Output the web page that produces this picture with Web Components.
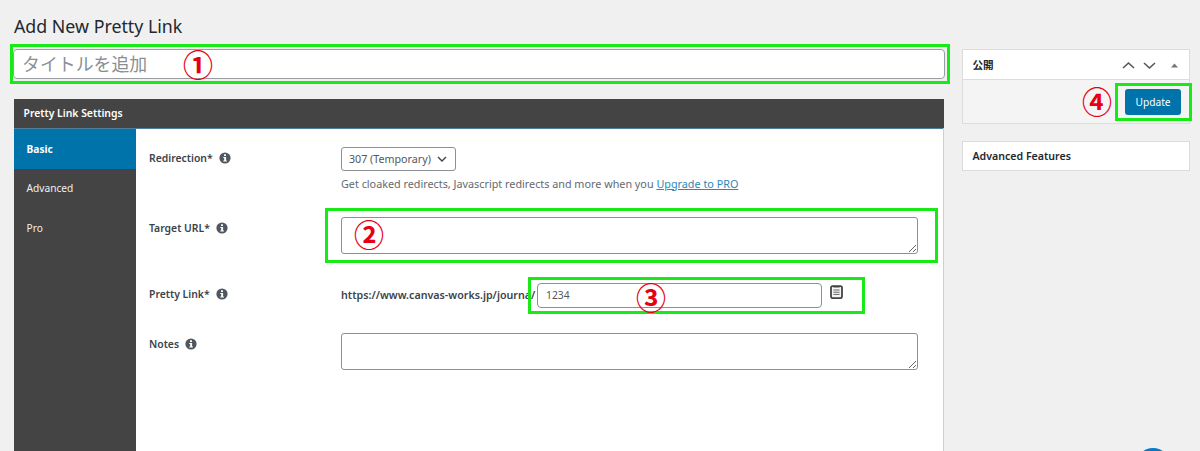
<!DOCTYPE html>
<html lang="ja"><head><meta charset="utf-8"><title>Add New Pretty Link</title>
<style>
html,body{margin:0;height:451px;overflow:hidden;background:#f0f0f1}
body{font:11px "Noto Sans","Noto Sans CJK JP",sans-serif;color:#3c434a}
</style></head><body>
<template id="t-page"><style>
:host{display:grid;grid-template-columns:930px 228px;column-gap:18px;padding:0 10px 0 14px;height:451px;overflow:hidden;box-sizing:content-box}
h1{grid-column:1/3;margin:0;font:400 17.8px/22px "Noto Sans",sans-serif;color:#23282d;padding-top:15px;height:34px}
.main{display:flex;flex-direction:column}
.side{display:flex;flex-direction:column;gap:17px}
.title-wrap{margin:0 -1px 20px;height:30px}
.fab{position:absolute;left:1136px;top:448px;width:34px;height:3px;overflow:hidden}
.fab::before{content:"";display:block;width:34px;height:34px;border-radius:50%;background:#0a78c4}
</style>
<h1>Add New Pretty Link</h1>
<div class="main"><div class="title-wrap"><slot name="title"></slot></div><slot name="panel"></slot></div>
<div class="side"><slot name="side"></slot></div>
<div class="fab"></div>
</template>

<template id="t-mark"><style>
:host{display:block;position:relative}
.frame{position:absolute;border:3px solid #17ea17;box-sizing:border-box;pointer-events:none;
 left:var(--l,0);right:var(--r,0);top:var(--t,0);bottom:var(--b,0)}
.num{position:absolute;left:var(--nx,0);top:var(--ny,0);width:44px;height:44px;margin:-22px 0 0 -22px;display:flex;align-items:center;justify-content:center;
 color:#e60012;font:700 30px/44px "Noto Sans CJK JP",sans-serif}
</style><slot></slot><div class="frame"></div><div class="num"></div></template>

<template id="t-field"><style>
:host{display:flex;align-items:center;box-sizing:border-box;background:#fff;border:1px solid #8c8f94;border-radius:4px;height:100%;padding:0 8px;color:#50575e;font:10.3px "Noto Sans",sans-serif}
:host([big]){font:17.9px "Noto Sans CJK JP",sans-serif;color:#8a8f94;border-color:#9a9ea3;padding:0 8px 2px}
</style><slot></slot></template>

<template id="t-panel"><style>
:host{display:block;background:#fff;border:1px solid #ccd0d4;border-top:0;border-bottom:0;height:352px;box-sizing:border-box;width:930px}
header{background:#444;color:#fff;height:29px;padding:0 9.5px;font:600 10.4px/29px "Noto Sans",sans-serif;margin:0 -1px}
.body{display:grid;grid-template-columns:122px 1fr;height:323px;margin-left:-1px;border-top:1px solid #4d7f9c}
nav{background:#444;display:flex;flex-direction:column}
.form{display:flex;flex-direction:column}
</style><header><slot name="head"></slot></header>
<div class="body"><nav><slot name="tabs"></slot></nav><div class="form"><slot></slot></div></div></template>

<template id="t-tab"><style>
:host{display:flex;align-items:center;height:39.5px;padding:0 0 0 12.5px;box-sizing:border-box;color:#f0f0f1;font:400 10.2px "Noto Sans",sans-serif}
:host([active]){background:#0073aa;color:#fff;font-weight:700}
</style><slot></slot></template>

<template id="t-row"><style>
:host{display:grid;grid-template-columns:192px 577px;padding-left:13px}
.lab{display:flex;align-items:center;gap:6px;font:600 10.4px "Noto Sans",sans-serif;color:#3c434a;height:18px;align-self:start;margin-top:var(--lt,0)}
</style><div class="lab"><slot name="label"></slot><info-icon></info-icon></div><div><slot></slot></div></template>

<template id="t-info"><style>:host{display:inline-flex}svg{display:block}</style>
<svg width="12" height="12" viewBox="0 0 12 12"><circle cx="6" cy="6" r="5.6" fill="#50575e"/><rect x="5" y="2.2" width="2" height="1.9" rx=".4" fill="#fff"/><path d="M4.3 5h2.8v3.6h.8v1H4.3v-1h.9V6h-.9z" fill="#fff"/></svg></template>

<template id="t-box"><style>
:host{display:block;background:#fff;border:1px solid #dcdcde;box-sizing:border-box}
header{display:flex;align-items:center;height:29px;padding:0 10px 0 9.5px;font:600 10.6px "Noto Sans","Noto Sans CJK JP",sans-serif;color:#23282d}
:host([bare]) header{height:28px}
.t{flex:1}
.acts{display:flex;align-items:center}
.foot{background:#f4f4f5;border-top:1px solid #dcdcde;height:44px;display:flex;align-items:center;justify-content:flex-end;padding:1px 8px 0 0;box-sizing:border-box}
.foot.empty{display:none}
</style><header><span class="t"><slot name="title"></slot></span><span class="acts"><slot name="acts"></slot></span></header>
<div class="foot"><slot></slot></div></template>

<template id="t-btn"><style>
:host{display:inline-flex;align-items:center;justify-content:center;width:56px;height:26px;border-radius:3px;background:#0073aa;color:#fff;font:400 10.2px "Noto Sans",sans-serif}
</style><slot></slot></template>

<template id="t-select"><style>
:host{display:block;position:relative;width:115px;height:24px}
select{appearance:none;display:block;width:115px;height:24px;font:10.7px "Noto Sans",sans-serif;color:#50575e;background:#fff;border:1px solid #8c8f94;border-radius:3px;padding:0 0 0 7px;box-sizing:border-box;margin:0}
svg{position:absolute;right:9px;top:9px}
</style><select><slot></slot></select><svg width="10" height="6" viewBox="0 0 10 6"><path d="M1 1l4 4 4-4" fill="none" stroke="#3c434a" stroke-width="1.4"/></svg></template>

<template id="t-copy"><style>:host{display:block}svg{display:block}</style>
<svg width="13" height="14" viewBox="0 0 13 14"><rect x="1" y="1.2" width="11" height="12" rx="1.6" fill="#f4f4f4" stroke="#444" stroke-width="1.8"/><path d="M3.4.9h6.2v1.6H3.4z" fill="#444"/><path d="M3.4 5h6.2M3.4 7.2h6.2M3.4 9.4h6.2" stroke="#666" stroke-width="1"/></svg></template>

<script>
const def=(n,t,extra)=>customElements.define(n,class extends HTMLElement{
 constructor(){super();this.attachShadow({mode:'open'}).append(document.getElementById(t).content.cloneNode(true));}
 connectedCallback(){extra&&extra(this)}
});
def('pl-page','t-page');
def('pl-mark','t-mark',e=>{e.shadowRoot.querySelector('.num').textContent=e.getAttribute('n')||'';});
def('pl-field','t-field');
def('pl-panel','t-panel');
def('pl-tab','t-tab');
def('info-icon','t-info');
def('pl-row','t-row');
def('pl-box','t-box',e=>{if(e.hasAttribute('bare'))e.shadowRoot.querySelector('.foot').classList.add('empty');});
def('pl-btn','t-btn');
def('pl-select','t-select',e=>{const s=e.shadowRoot.querySelector('select');if(!s.options.length){const o=document.createElement('option');o.textContent=e.getAttribute('value');s.append(o);}});
def('copy-icon','t-copy');
</script>

<pl-page>
 <pl-mark slot="title" n="①" style="--l:-3px;--r:-5px;--t:-5px;--b:-5px;--nx:185px;--ny:14px;height:30px">
  <pl-field big>タイトルを追加</pl-field>
 </pl-mark>
 <pl-panel slot="panel">
  <span slot="head">Pretty Link Settings</span>
  <pl-tab slot="tabs" active>Basic</pl-tab>
  <pl-tab slot="tabs">Advanced</pl-tab>
  <pl-tab slot="tabs">Pro</pl-tab>

  <pl-row style="--lt:20px">
   <span slot="label">Redirection*</span>
   <div style="padding-top:17.5px">
    <pl-select value="307 (Temporary)"></pl-select>
    <div style="font:400 10.8px/14px 'Noto Sans',sans-serif;color:#646970;margin-top:6px;white-space:nowrap">Get cloaked redirects, Javascript redirects and more when you <a href="#" style="color:#2b87b5">Upgrade to PRO</a></div>
   </div>
  </pl-row>

  <pl-row style="--lt:3px;margin-top:25px">
   <span slot="label">Target URL*</span>
   <pl-mark n="②" style="--l:-16px;--r:-20px;--t:-9px;--b:-9px;--nx:28px;--ny:16px;margin-top:1px;height:37px">
    <textarea style="display:block;width:100%;height:37px;box-sizing:border-box;background:#fff;border:1px solid #8c8f94;border-radius:3px;margin:0;padding:0"></textarea>
   </pl-mark>
  </pl-row>

  <pl-row style="--lt:2px;margin-top:29px">
   <span slot="label">Pretty Link*</span>
   <div style="display:flex;align-items:center;height:25px;white-space:nowrap">
    <span style="font:600 10.7px 'Noto Sans',sans-serif;color:#3c434a;width:196px;flex:none;overflow:hidden">https://www.canvas-works.jp/journa/</span>
    <pl-mark n="③" style="--l:-9px;--r:-43px;--t:-6px;--b:-6px;--nx:114px;--ny:13px;width:285px;height:25px;flex:none">
     <pl-field>1234</pl-field>
    </pl-mark>
    <copy-icon style="margin:-7px 0 0 8px"></copy-icon>
   </div>
  </pl-row>

  <pl-row style="--lt:2px;margin-top:25px">
   <span slot="label">Notes</span>
   <textarea style="display:block;width:100%;height:37px;box-sizing:border-box;background:#fff;border:1px solid #8c8f94;border-radius:3px;margin:0;padding:0"></textarea>
  </pl-row>
 </pl-panel>

 <pl-box slot="side">
  <span slot="title">公開</span>
  <svg slot="acts" width="64" height="12" viewBox="0 0 64 12" style="margin-right:-7px;display:block"><path d="M1 9l5.500-5 5.500 5" fill="none" stroke="#50575e" stroke-width="1.6"/><path d="M22 4l5.500 5 5.500-5" fill="none" stroke="#50575e" stroke-width="1.6"/><path d="M49 8.500l3.500-4 3.500 4z" fill="#72777c"/></svg>
  <pl-mark n="④" style="--l:-10px;--r:-11px;--t:-6px;--b:-6px;--nx:-28px;--ny:11px">
   <pl-btn>Update</pl-btn>
  </pl-mark>
 </pl-box>
 <pl-box slot="side" bare><span slot="title">Advanced Features</span></pl-box>
</pl-page>
</body></html>
